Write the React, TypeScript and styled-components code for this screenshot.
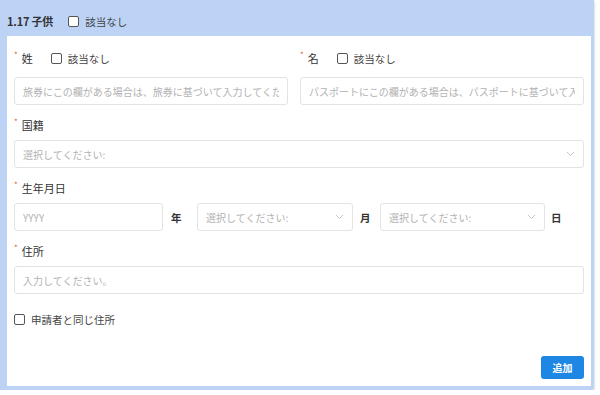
import React from 'react'
import styled, { createGlobalStyle } from 'styled-components'

const GlobalStyle = createGlobalStyle`
  body {
    margin: 0;
    background: #ffffff;
    font-family: "Noto Sans CJK JP", "Noto Sans", sans-serif;
    color: #333333;
  }
`

const Panel = styled.section`
  width: 594px;
  height: 390px;
  box-sizing: border-box;
  background: #bdd3f6;
  padding: 0 3px 4px 7px;
  border-radius: 0 0 3px 0;
  box-shadow: 1px 1px 2px rgba(0, 0, 0, 0.12);
  display: flex;
  flex-direction: column;
`

const Header = styled.div`
  height: 36px;
  display: flex;
  align-items: center;
  padding-top: 6px;
  box-sizing: border-box;
  gap: 15px;
`

const Title = styled.span`
  font-size: 11px;
  font-weight: 700;
  color: #333333;
  letter-spacing: -0.2px;
`

const Body = styled.div`
  flex: 1;
  min-width: 0;
  background: #ffffff;
  padding: 11px 7px 7px 7px;
  display: flex;
  flex-direction: column;
  gap: 11px;
`

const Field = styled.div`
  display: flex;
  flex-direction: column;
  min-width: 0;
`

const NameGrid = styled.div`
  display: grid;
  grid-template-columns: 274px minmax(0, 1fr);
  gap: 12px;
`

const LabelRow = styled.div<{ tall?: boolean }>`
  display: flex;
  align-items: center;
  height: ${({ tall }) => (tall ? '22px' : '18px')};
  margin-bottom: ${({ tall }) => (tall ? '8px' : '6px')};
  gap: 18px;
`

const Label = styled.span`
  font-size: 11px;
  color: #333333;
  display: flex;
  align-items: flex-start;
`

const Star = styled.span`
  color: #e4572e;
  font-size: 8px;
  margin-right: 4px;
  line-height: 1;
  margin-top: 1px;
`

const Check = styled.label`
  display: inline-flex;
  align-items: center;
  gap: 6px;
  font-size: 10.5px;
  color: #444444;
`

const Box = styled.span`
  width: 9px;
  height: 9px;
  border: 1px solid #555555;
  border-radius: 2px;
  background: #ffffff;
`

const Input = styled.div<{ width?: string }>`
  height: 28px;
  box-sizing: border-box;
  border: 1px solid #e3e3e3;
  border-radius: 3px;
  background: #ffffff;
  padding: 0 8px;
  display: flex;
  align-items: center;
  justify-content: space-between;
  gap: 6px;
  width: ${({ width }) => width || 'auto'};
  min-width: 0;
  flex-shrink: 0;
  font-size: 10px;
  color: #b2b2b2;
  white-space: nowrap;
  overflow: hidden;
`

const Placeholder = styled.span`
  min-width: 0;
  overflow: hidden;
  text-overflow: clip;
`

const DateRow = styled.div`
  display: flex;
  align-items: center;
`

const Unit = styled.span<{ w?: number; pad?: number }>`
  font-size: 10.5px;
  font-weight: 700;
  color: #333333;
  width: ${({ w }) => w ?? 34}px;
  padding-left: ${({ pad }) => pad ?? 8}px;
  box-sizing: border-box;
  flex-shrink: 0;
`

const SameRow = styled.div`
  margin-top: 5px;
  height: 18px;
  display: flex;
  align-items: center;
`

const Footer = styled.div`
  margin-top: auto;
  display: flex;
  justify-content: flex-end;
`

const Button = styled.button`
  width: 43px;
  height: 23px;
  border: none;
  border-radius: 3px;
  background: #1e87e3;
  color: #ffffff;
  font-family: inherit;
  font-size: 10px;
  font-weight: 700;
  padding: 0;
`

const Chevron = () => (
  <svg width="9" height="6" viewBox="0 0 9 6" fill="none" style={{ flexShrink: 0 }}>
    <path d="M1 1l3.5 3.5L8 1" stroke="#c4c4c4" strokeWidth="1" />
  </svg>
)

const Select = ({ width }: { width?: string }) => (
  <Input width={width}>
    <Placeholder>選択してください:</Placeholder>
    <Chevron />
  </Input>
)

export default function App() {
  return (
    <>
      <GlobalStyle />
      <Panel>
        <Header>
          <Title>1.17 子供</Title>
          <Check>
            <Box />
            該当なし
          </Check>
        </Header>
        <Body>
          <NameGrid>
            <Field>
              <LabelRow tall>
                <Label>
                  <Star>*</Star>姓
                </Label>
                <Check>
                  <Box />
                  該当なし
                </Check>
              </LabelRow>
              <Input>
                <Placeholder>旅券にこの欄がある場合は、旅券に基づいて入力してください。</Placeholder>
              </Input>
            </Field>
            <Field>
              <LabelRow tall>
                <Label>
                  <Star>*</Star>名
                </Label>
                <Check>
                  <Box />
                  該当なし
                </Check>
              </LabelRow>
              <Input>
                <Placeholder>パスポートにこの欄がある場合は、パスポートに基づいて入力してください。</Placeholder>
              </Input>
            </Field>
          </NameGrid>
          <Field>
            <LabelRow>
              <Label>
                <Star>*</Star>国籍
              </Label>
            </LabelRow>
            <Select />
          </Field>
          <Field>
            <LabelRow>
              <Label>
                <Star>*</Star>生年月日
              </Label>
            </LabelRow>
            <DateRow>
              <Input width="149px">
                <Placeholder>YYYY</Placeholder>
              </Input>
              <Unit>年</Unit>
              <Select width="156px" />
              <Unit w={27} pad={7}>月</Unit>
              <Select width="165px" />
              <Unit pad={6}>日</Unit>
            </DateRow>
          </Field>
          <Field>
            <LabelRow>
              <Label>
                <Star>*</Star>住所
              </Label>
            </LabelRow>
            <Input>
              <Placeholder>入力してください。</Placeholder>
            </Input>
          </Field>
          <SameRow>
            <Check>
              <Box />
              申請者と同じ住所
            </Check>
          </SameRow>
          <Footer>
            <Button>追加</Button>
          </Footer>
        </Body>
      </Panel>
    </>
  )
}
